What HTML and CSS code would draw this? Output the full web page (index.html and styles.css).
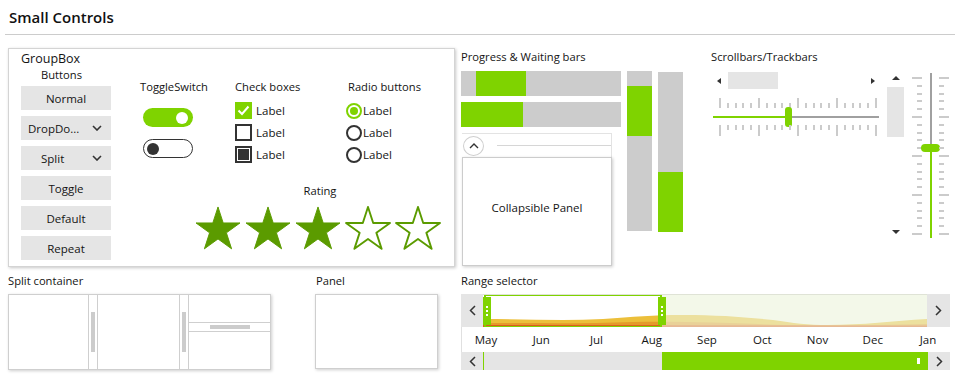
FILE: index.html
```html
<!DOCTYPE html>
<html lang="en">
<head>
<meta charset="utf-8">
<title>Small Controls</title>
<link rel="stylesheet" href="styles.css">
</head>
<body>
<svg class="defs" width="0" height="0" aria-hidden="true">
  <defs>
    <symbol id="star" viewBox="-1 -1 48 46">
      <polygon points="23,0 28.43,16.72 46,16.72 31.79,27.06 37.22,43.78 23,33.44 8.78,43.78 14.21,27.06 0,16.72 17.57,16.72" stroke-linejoin="round"/>
    </symbol>
  </defs>
</svg>
<header class="page-head"><h1 class="title">Small Controls</h1></header>

<section class="row row-top">
  <div class="groupbox">
    <div class="gb-legend">GroupBox</div>
    <div class="gb-body">
      <div class="btn-col">
        <div class="col-title">Buttons</div>
        <div class="btn">Normal</div>
        <div class="btn btn-drop"><span>DropDo...</span><svg class="chev-down" width="10" height="6" viewBox="0 0 10 6"><polyline points="1,1 5,5 9,1"/></svg></div>
        <div class="btn btn-split"><span>Split</span><svg class="chev-down" width="10" height="6" viewBox="0 0 10 6"><polyline points="1,1 5,5 9,1"/></svg></div>
        <div class="btn">Toggle</div>
        <div class="btn">Default</div>
        <div class="btn">Repeat</div>
      </div>
      <div class="gb-right">
        <div class="ctrl-row">
          <div class="ctrl-col col-toggle">
            <div class="ctrl-title">ToggleSwitch</div>
            <div class="toggle toggle-on"><span class="knob"></span></div>
            <div class="toggle toggle-off"><span class="knob"></span></div>
          </div>
          <div class="ctrl-col col-check">
            <div class="ctrl-title">Check boxes</div>
            <div class="opt"><span class="cbox cbox-on"><svg width="17" height="17" viewBox="0 0 17 17"><polyline points="3.5,8.5 7,12 13.5,4.5"/></svg></span><span>Label</span></div>
            <div class="opt"><span class="cbox"></span><span>Label</span></div>
            <div class="opt"><span class="cbox cbox-mixed"><span class="mix"></span></span><span>Label</span></div>
          </div>
          <div class="ctrl-col col-radio">
            <div class="ctrl-title radio-title">Radio buttons</div>
            <div class="opt"><span class="radio radio-on"><span class="dot"></span></span><span>Label</span></div>
            <div class="opt"><span class="radio"></span><span>Label</span></div>
            <div class="opt"><span class="radio"></span><span>Label</span></div>
          </div>
        </div>
        <div class="rating">
          <div class="rating-title">Rating</div>
          <div class="stars">
            <svg class="star full" width="46" height="44"><use href="#star"/></svg>
            <svg class="star full" width="46" height="44"><use href="#star"/></svg>
            <svg class="star full" width="46" height="44"><use href="#star"/></svg>
            <svg class="star empty" width="46" height="44"><use href="#star"/></svg>
            <svg class="star empty" width="46" height="44"><use href="#star"/></svg>
          </div>
        </div>
      </div>
    </div>
  </div>

  <div class="prog">
    <div class="sec-label">Progress &amp; Waiting bars</div>
    <div class="prog-body">
      <div class="prog-left">
        <div class="hbar"><div class="fill fill-h1"></div></div>
        <div class="hbar hbar2"><div class="fill fill-h2"></div></div>
        <div class="collapsible">
          <div class="coll-head">
            <span class="coll-btn"><svg width="10" height="6" viewBox="0 0 10 6"><polyline points="1,5 5,1 9,5"/></svg></span>
            <span class="coll-line"></span>
          </div>
          <div class="coll-body">Collapsible Panel</div>
        </div>
      </div>
      <div class="vbar"><div class="fill fill-v1"></div></div>
      <div class="vbar vbar2"><div class="fill fill-v2"></div></div>
    </div>
  </div>

  <div class="scrolls">
    <div class="sb-left">
      <div class="sec-label">Scrollbars/Trackbars</div>
      <div class="hscroll">
        <span class="tri tri-left"></span>
        <span class="hthumb"></span>
        <span class="tri tri-right"></span>
      </div>
      <div class="htrack">
        <div class="ticks ticks-top">
          <i class="long"></i><i></i><i></i><i></i><i></i><i class="long"></i><i></i><i></i><i></i><i></i><i class="long"></i><i></i><i></i><i></i><i></i><i class="long"></i><i></i><i></i><i></i><i></i><i class="long"></i>
        </div>
        <div class="hline">
          <span class="seg seg-green"></span><span class="hknob"></span><span class="seg seg-gray"></span>
        </div>
        <div class="ticks ticks-bottom">
          <i class="long"></i><i></i><i></i><i></i><i></i><i class="long"></i><i></i><i></i><i></i><i></i><i class="long"></i><i></i><i></i><i></i><i></i><i class="long"></i><i></i><i></i><i></i><i></i><i class="long"></i>
        </div>
      </div>
    </div>
    <div class="vscroll">
      <span class="tri tri-up"></span>
      <span class="vthumb"></span>
      <span class="tri tri-down"></span>
    </div>
    <div class="vtrack">
      <div class="vticks vticks-left">
        <i class="long"></i><i></i><i></i><i></i><i></i><i class="long"></i><i></i><i></i><i></i><i></i><i class="long"></i><i></i><i></i><i></i><i></i><i class="long"></i><i></i><i></i><i></i><i></i><i class="long"></i>
      </div>
      <div class="vline">
        <span class="vseg vseg-gray"></span><span class="vknob"></span><span class="vseg vseg-green"></span>
      </div>
      <div class="vticks vticks-right">
        <i class="long"></i><i></i><i></i><i></i><i></i><i class="long"></i><i></i><i></i><i></i><i></i><i class="long"></i><i></i><i></i><i></i><i></i><i class="long"></i><i></i><i></i><i></i><i></i><i class="long"></i>
      </div>
    </div>
  </div>
</section>

<section class="row row-bottom">
  <div class="split-sec">
    <div class="sec-label">Split container</div>
    <div class="split-box">
      <div class="pane pane-a"></div>
      <div class="vsplit"><span class="grip-v"></span></div>
      <div class="pane pane-b"></div>
      <div class="vsplit"><span class="grip-v"></span></div>
      <div class="pane-stack">
        <div class="pane pane-top"></div>
        <div class="hsplit"><span class="grip-h"></span></div>
        <div class="pane pane-bot"></div>
      </div>
    </div>
  </div>

  <div class="panel-sec">
    <div class="sec-label">Panel</div>
    <div class="panel-box"></div>
  </div>

  <div class="range-sec">
    <div class="sec-label">Range selector</div>
    <div class="range">
      <div class="range-top">
        <div class="r-btn"><svg width="7" height="11" viewBox="0 0 7 11"><polyline points="6,1 1.5,5.5 6,10"/></svg></div>
        <div class="chart">
          <svg class="waves" width="444" height="33" viewBox="0 0 444 33">
            <path fill="#ecbf3a" d="M0,25 C40,25 80,27 120,25 C150,23 170,21 200,21 C235,21 260,23 290,26 C310,29 325,31 345,31 C380,31 410,27 444,25 L444,33 L0,33 Z"/>
            <path fill="#e49a2a" d="M0,29 C50,29 100,30 150,28 C200,27 250,29 300,31 C350,32 400,31 444,30 L444,33 L0,33 Z"/>
            <path fill="#de5a1e" d="M0,31 L444,31.5 L444,33 L0,33 Z"/>
          </svg>
          <div class="shade"></div>
          <div class="selection">
            <span class="handle handle-l"><i></i><i></i><i></i></span>
            <span class="handle handle-r"><i></i><i></i><i></i></span>
          </div>
        </div>
        <div class="r-btn r-btn-right"><svg width="7" height="11" viewBox="0 0 7 11"><polyline points="1,1 5.5,5.5 1,10"/></svg></div>
      </div>
      <div class="months">
        <span>May</span><span>Jun</span><span>Jul</span><span>Aug</span><span>Sep</span><span>Oct</span><span>Nov</span><span>Dec</span><span>Jan</span>
      </div>
      <div class="range-scroll">
        <div class="r-btn"><svg width="7" height="11" viewBox="0 0 7 11"><polyline points="6,1 1.5,5.5 6,10"/></svg></div>
        <span class="rs-edge"></span>
        <span class="rs-track"></span>
        <span class="rs-thumb"><span class="rs-mark"></span></span>
        <div class="r-btn r-btn-right"><svg width="7" height="11" viewBox="0 0 7 11"><polyline points="1,1 5.5,5.5 1,10"/></svg></div>
      </div>
    </div>
  </div>
</section>
</body>
</html>
```

FILE: styles.css
```css
* { box-sizing: border-box; }
html, body { margin: 0; padding: 0; background: #fff; }
body {
  font-family: "Open Sans", "Noto Sans", sans-serif;
  font-size: 12px;
  color: #141414;
  width: 955px;
  height: 375px;
  overflow: hidden;
}
.defs { position: absolute; width: 0; height: 0; }

.page-head {
  margin-left: 5px;
  height: 35px;
  border-bottom: 1px solid #cccccc;
  padding-left: 4px;
}
.title {
  margin: 0;
  font-size: 15px;
  font-weight: 600;
  line-height: 20px;
  padding-top: 7px;
  color: #111;
}

.row { display: flex; padding-left: 8px; }
.row-top { margin-top: 13px; height: 219px; }
.row-bottom { margin-top: 6px; }

.sec-label { font-size: 11.2px; line-height: 16px; height: 16px; white-space: nowrap; }

/* GroupBox */
.groupbox {
  width: 447px;
  height: 219px;
  border: 1px solid #d4d4d4;
  box-shadow: 1px 1px 3px rgba(0,0,0,0.22);
  padding: 2px 0 0 12px;
}
.gb-legend { font-size: 12.5px; line-height: 16px; height: 16px; }
.gb-body { display: flex; }
.btn-col { width: 90px; display: flex; flex-direction: column; }
.col-title { font-size: 11.2px; line-height: 16px; height: 16px; padding-left: 20px; margin-bottom: 3px; }
.btn {
  height: 24px;
  margin-bottom: 6px;
  background: #e5e5e5;
  display: flex;
  align-items: center;
  justify-content: center;
  font-size: 11.5px;
}
.btn-drop { justify-content: space-between; padding: 0 9px 0 7px; }
.btn-split { justify-content: flex-start; padding: 0 9px 0 20px; }
.btn-split svg { margin-left: auto; }
.chev-down polyline { fill: none; stroke: #333; stroke-width: 1.6; }

.gb-right { margin-left: 29px; display: flex; flex-direction: column; }
.ctrl-row { display: flex; margin-top: 12px; }
.ctrl-col { display: flex; flex-direction: column; }
.col-toggle { width: 95px; }
.col-check { width: 110px; }
.col-radio { width: 100px; }
.ctrl-title { font-size: 11.2px; line-height: 16px; height: 16px; white-space: nowrap; }
.radio-title { padding-left: 3px; }

.toggle {
  width: 50px;
  height: 19px;
  border-radius: 10px;
  margin-left: 3px;
  display: flex;
  align-items: center;
}
.toggle-on { margin-top: 13px; background: #7fd300; justify-content: flex-end; padding-right: 5px; }
.toggle-on .knob { width: 12px; height: 12px; border-radius: 50%; background: #fff; }
.toggle-off { margin-top: 12px; border: 1.3px solid #333; padding-left: 3px; }
.toggle-off .knob { width: 12px; height: 12px; border-radius: 50%; background: #333; }

.opt {
  display: flex;
  align-items: center;
  height: 17px;
  margin-top: 5px;
  font-size: 11.5px;
  gap: 4px;
}
.col-check .ctrl-title + .opt, .col-radio .ctrl-title + .opt { margin-top: 7px; }
.cbox {
  width: 17px;
  height: 17px;
  border: 2px solid #333;
  display: flex;
  align-items: center;
  justify-content: center;
  flex: none;
}
.cbox-on { border: none; background: #7fd300; }
.cbox-on polyline { fill: none; stroke: #fff; stroke-width: 2; }
.mix { width: 11px; height: 11px; background: #333; }
.radio {
  width: 16px;
  height: 16px;
  border-radius: 50%;
  border: 2px solid #333;
  margin-left: 1px;
  display: flex;
  align-items: center;
  justify-content: center;
  flex: none;
}
.opt .radio + span { margin-left: -3px; }
.radio-on { border-color: #7fd300; }
.radio-on .dot { width: 8px; height: 8px; border-radius: 50%; background: #7fd300; }

.rating { margin-top: 20px; margin-left: 55px; width: 250px; }
.rating-title { font-size: 11.2px; line-height: 16px; text-align: center; }
.stars { display: flex; gap: 4px; margin-top: 7px; }
.star { display: block; }
.star.full { fill: #5b9b00; stroke: #5b9b00; stroke-width: 1; }
.star.empty { fill: #fff; stroke: #5b9b00; stroke-width: 2; }

/* Progress */
.prog { width: 222px; margin-left: 6px; }
.prog .sec-label { margin-top: 1px; }
.prog-body { display: flex; gap: 6px; margin-top: 6px; }
.prog-left { width: 160px; display: flex; flex-direction: column; }
.hbar { height: 25px; background: #cccccc; display: flex; }
.hbar2 { margin-top: 6px; }
.fill { background: #7fd300; }
.fill-h1 { margin-left: 15px; width: 50px; }
.fill-h2 { width: 62px; }
.vbar { width: 25px; height: 160px; background: #cccccc; display: flex; flex-direction: column; }
.vbar2 { margin-top: 1px; }
.fill-v1 { margin-top: 15px; height: 50px; }
.fill-v2 { margin-top: 100px; height: 60px; }

.collapsible {
  margin-top: 6px;
  margin-left: 1px;
  width: 150px;
  height: 133px;
  border-top: 1px solid #e3e3e3;
  border-right: 1px solid #e3e3e3;
  display: flex;
  flex-direction: column;
}
.coll-head { height: 23px; display: flex; align-items: center; }
.coll-btn {
  width: 21px;
  height: 20px;
  border: 1px solid #cfcfcf;
  border-radius: 50%;
  margin-left: 1px;
  display: flex;
  align-items: center;
  justify-content: center;
}
.coll-btn polyline { fill: none; stroke: #333; stroke-width: 1.4; }
.coll-line { flex: 1; height: 1px; background: #d6d6d6; margin-left: 13px; }
.coll-body {
  flex: 1;
  border: 1px solid #cccccc;
  margin-right: -1px;
  box-shadow: 1px 1px 3px rgba(0,0,0,0.2);
  display: flex;
  align-items: center;
  justify-content: center;
  padding-bottom: 9px;
  font-size: 11.5px;
}

/* Scrollbars / trackbars */
.scrolls { display: flex; margin-left: 28px; }
.sb-left { width: 168px; }
.sb-left .sec-label { margin-top: 1px; }
.hscroll {
  margin-top: 7px;
  margin-left: 2px;
  width: 164px;
  height: 17px;
  display: flex;
  align-items: center;
  padding: 0 2px 0 4px;
}
.tri { width: 0; height: 0; display: block; border-style: solid; }
.tri-left { border-width: 3.5px 4px 3.5px 0; border-color: transparent #333 transparent transparent; }
.tri-right { border-width: 3.5px 0 3.5px 4px; border-color: transparent transparent transparent #333; margin-left: auto; }
.tri-up { border-width: 0 4px 4px 4px; border-color: transparent transparent #333 transparent; }
.tri-down { border-width: 4px 4px 0 4px; border-color: #333 transparent transparent transparent; margin-top: auto; }
.hthumb { width: 50px; height: 17px; background: #e5e5e5; margin-left: 7px; }

.htrack { margin-top: 9px; margin-left: 2px; width: 166px; }
.ticks { display: flex; justify-content: space-between; margin-left: 6px; width: 158px; }
.ticks i { display: block; width: 2px; background: #cbcbcb; }
.ticks-top { height: 10px; align-items: flex-end; }
.ticks-top i { height: 5px; }
.ticks-top i.long { height: 10px; }
.ticks-bottom { height: 11px; align-items: flex-start; }
.ticks-bottom i { height: 5px; }
.ticks-bottom i.long { height: 11px; }
.hline { height: 17px; display: flex; align-items: center; }
.seg { height: 2px; }
.seg-green { width: 72px; background: #7fd300; }
.seg-gray { flex: 1; background: #a0a0a0; }
.hknob { width: 7px; height: 20px; border-radius: 3px; background: #7fd300; flex: none; }

.vscroll {
  margin-left: 8px;
  margin-top: 24px;
  width: 17px;
  height: 166px;
  display: flex;
  flex-direction: column;
  align-items: center;
  padding: 4px 0 4px;
}
.vthumb { width: 17px; height: 50px; background: #e5e5e5; margin-top: 7px; }

.vtrack { margin-left: 8px; margin-top: 25px; height: 165px; display: flex; }
.vticks { display: flex; flex-direction: column; justify-content: space-between; padding: 4px 0 3px; height: 165px; }
.vticks i { display: block; height: 2px; background: #cbcbcb; width: 5px; }
.vticks i.long { width: 10px; }
.vticks-left { width: 10px; align-items: flex-end; }
.vticks-right { width: 11px; align-items: flex-start; }
.vline { width: 17px; display: flex; flex-direction: column; align-items: center; }
.vseg { width: 2px; }
.vseg-gray { height: 71px; background: #a0a0a0; }
.vseg-green { flex: 1; background: #7fd300; }
.vknob { width: 19px; height: 8px; border-radius: 4px; background: #7fd300; flex: none; }

/* Bottom row */
.split-sec { width: 263px; }
.split-box {
  margin-top: 5px;
  height: 76px;
  border: 1px solid #cfcfcf;
  box-shadow: 1px 1px 3px rgba(0,0,0,0.2);
  display: flex;
}
.pane { background: #fff; }
.pane-a { width: 80px; border-right: 1px solid #cfcfcf; }
.pane-b { width: 83px; border-left: 1px solid #cfcfcf; border-right: 1px solid #cfcfcf; }
.vsplit { width: 8px; display: flex; align-items: center; justify-content: center; }
.grip-v { width: 4px; height: 40px; background: #cccccc; }
.pane-stack { flex: 1; display: flex; flex-direction: column; border-left: 1px solid #cfcfcf; }
.pane-top { height: 28px; border-bottom: 1px solid #cfcfcf; }
.hsplit { height: 8px; display: flex; align-items: center; justify-content: center; }
.grip-h { width: 40px; height: 4px; background: #cccccc; }
.pane-bot { flex: 1; border-top: 1px solid #cfcfcf; }

.panel-sec { width: 123px; margin-left: 44px; }
.panel-sec .sec-label { padding-left: 1px; }
.panel-box {
  margin-top: 5px;
  height: 75px;
  border: 1px solid #cfcfcf;
  box-shadow: 1px 1px 3px rgba(0,0,0,0.2);
}

.range-sec { width: 489px; margin-left: 23px; }
.range { margin-top: 5px; display: flex; flex-direction: column; }
.range-top { height: 33px; display: flex; }
.r-btn {
  width: 22px;
  background: #e5e5e5;
  display: flex;
  align-items: center;
  justify-content: center;
  flex: none;
}
.r-btn-right { width: 23px; }
.r-btn polyline { fill: none; stroke: #333; stroke-width: 1.5; }
.chart {
  position: relative;
  width: 444px;
  height: 33px;
  background: #fff;
  overflow: hidden;
  border-top: 1px solid #dfe3d6;
}
.waves { display: block; margin-top: -1px; }
.shade {
  position: absolute;
  left: 179px;
  right: 0;
  top: 0;
  bottom: 0;
  background: rgba(235, 243, 220, 0.62);
}
.selection {
  position: absolute;
  left: 1px;
  top: -1px;
  width: 178px;
  height: 34px;
  border: 2px solid #7fd300;
}
.handle {
  position: absolute;
  top: 1px;
  width: 8px;
  height: 28px;
  background: #7fd300;
  display: flex;
  flex-direction: column;
  align-items: center;
  justify-content: center;
  gap: 2px;
}
.handle i { display: block; width: 2px; height: 2px; background: #fff; }
.handle-l { left: -3px; }
.handle-r { right: -6px; }

.months {
  height: 25px;
  display: flex;
  justify-content: space-between;
  padding: 0 2px 0 4px;
  border-left: 1px solid #e0e0e0;
  background: #fff;
}
.months span { width: 40px; text-align: center; line-height: 25px; font-size: 11.5px; }

.range-scroll { height: 18px; display: flex; }
.range-scroll .r-btn-right { width: 22px; }
.rs-edge { width: 1px; background: #7fd300; }
.rs-track { width: 178px; background: #e5e5e5; }
.rs-thumb {
  flex: 1;
  background: #7fd300;
  display: flex;
  align-items: center;
  justify-content: flex-end;
  padding-right: 8px;
}
.rs-mark { width: 3px; height: 6px; background: #fff; }
```
